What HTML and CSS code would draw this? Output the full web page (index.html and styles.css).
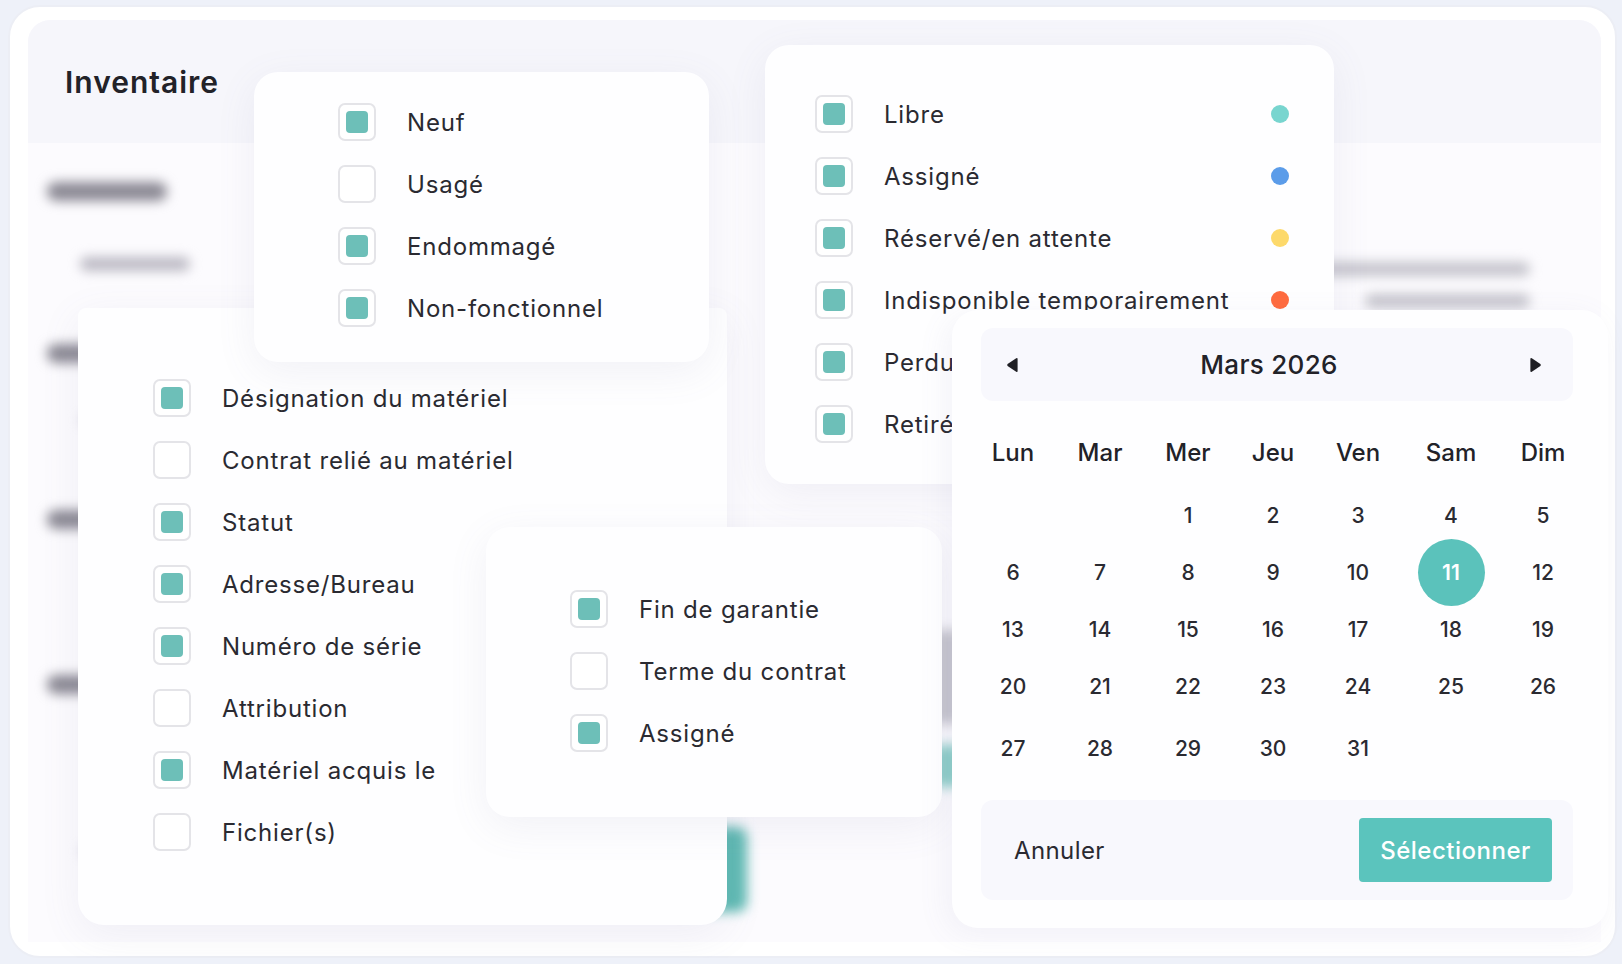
FILE: index.html
```html
<!DOCTYPE html>
<html lang="fr">
<head>
    <meta charset="UTF-8">
    <meta name="viewport" content="width=device-width, initial-scale=1.0">
    <title>Inventaire</title>
    <link rel="stylesheet" href="styles.css">
</head>
<body>

<div class="frame">

    <!-- page behind the popups, out of focus -->
    <div class="app">
        <header class="app-head">
            <h1>Inventaire</h1>
        </header>
        <div class="app-body">
            <div class="col-left">
                <div class="b-title first"></div>
                <div class="b-field"></div>
                <div class="b-title t2"></div>
                <div class="b-field light"></div>
                <div class="b-title t3"></div>
                <div class="b-title t4"></div>
                <div class="b-field light bottom"></div>
            </div>
            <div class="col-mid">
                <div class="b-block grey"></div>
                <div class="b-block teal"></div>
                <div class="b-button"></div>
            </div>
            <div class="col-right">
                <div class="b-line"></div>
                <div class="b-line short"></div>
            </div>
        </div>
    </div>

    <!-- columns shown in the table -->
    <div class="card card-columns">
        <ul class="checklist">
            <li><span class="box on"></span>Désignation du matériel</li>
            <li><span class="box"></span>Contrat relié au matériel</li>
            <li><span class="box on"></span>Statut</li>
            <li><span class="box on"></span>Adresse/Bureau</li>
            <li><span class="box on"></span>Numéro de série</li>
            <li><span class="box"></span>Attribution</li>
            <li><span class="box on"></span>Matériel acquis le</li>
            <li><span class="box"></span>Fichier(s)</li>
        </ul>
    </div>

    <!-- condition filter -->
    <div class="card card-state">
        <ul class="checklist">
            <li><span class="box on"></span>Neuf</li>
            <li><span class="box"></span>Usagé</li>
            <li><span class="box on"></span>Endommagé</li>
            <li><span class="box on"></span>Non-fonctionnel</li>
        </ul>
    </div>

    <!-- date columns -->
    <div class="card card-dates">
        <ul class="checklist">
            <li><span class="box on"></span>Fin de garantie</li>
            <li><span class="box"></span>Terme du contrat</li>
            <li><span class="box on"></span>Assigné</li>
        </ul>
    </div>

    <!-- status filter -->
    <div class="card card-status">
        <ul class="checklist">
            <li><span class="box on"></span>Libre<span class="dot free"></span></li>
            <li><span class="box on"></span>Assigné<span class="dot assigned"></span></li>
            <li><span class="box on"></span>Réservé/en attente<span class="dot pending"></span></li>
            <li><span class="box on"></span>Indisponible temporairement<span class="dot off"></span></li>
            <li><span class="box on"></span>Perdu</li>
            <li><span class="box on"></span>Retiré</li>
        </ul>
    </div>

    <!-- date picker -->
    <div class="card calendar">
        <div class="cal-head">
            <button class="cal-nav" aria-label="Mois précédent">
                <svg width="14" height="18" viewBox="0 0 14 18"><path d="M11.2 2.2 L2.6 8 Q1.6 9 2.6 10 L11.2 15.8 Q12.6 16.6 12.6 15 L12.6 3 Q12.6 1.4 11.2 2.2 Z" fill="#1f1f24"/></svg>
            </button>
            <span class="cal-title">Mars 2026</span>
            <button class="cal-nav" aria-label="Mois suivant">
                <svg width="14" height="18" viewBox="0 0 14 18"><path d="M2.8 2.2 L11.4 8 Q12.4 9 11.4 10 L2.8 15.8 Q1.4 16.6 1.4 15 L1.4 3 Q1.4 1.4 2.8 2.2 Z" fill="#1f1f24"/></svg>
            </button>
        </div>
        <div class="cal-grid">
            <span class="wd">Lun</span><span class="wd">Mar</span><span class="wd">Mer</span><span class="wd">Jeu</span><span class="wd">Ven</span><span class="wd">Sam</span><span class="wd">Dim</span>

            <span></span><span></span><span class="d">1</span><span class="d">2</span><span class="d">3</span><span class="d">4</span><span class="d">5</span>
            <span class="d">6</span><span class="d">7</span><span class="d">8</span><span class="d">9</span><span class="d">10</span><span class="d"><b class="sel">11</b></span><span class="d">12</span>
            <span class="d">13</span><span class="d">14</span><span class="d">15</span><span class="d">16</span><span class="d">17</span><span class="d">18</span><span class="d">19</span>
            <span class="d">20</span><span class="d">21</span><span class="d">22</span><span class="d">23</span><span class="d">24</span><span class="d">25</span><span class="d">26</span>
            <span class="d">27</span><span class="d">28</span><span class="d">29</span><span class="d">30</span><span class="d">31</span><span></span><span></span>
        </div>
        <div class="cal-foot">
            <button class="btn-cancel">Annuler</button>
            <button class="btn-select">Sélectionner</button>
        </div>
    </div>

</div>

</body>
</html>
```

FILE: styles.css
```css
body {
    margin: 0;
    background-color: #eef1f9;
    font-family: Inter, "Noto Sans", sans-serif;
    color: #2a2a31;
    overflow: hidden;
}

.frame {
    position: relative;
    height: 949px;
    margin: 5px 5px 0 8px;
    background-color: #fff;
    border: 2px solid #eceef5;
    border-radius: 32px;
}

/* ---- background app ---- */

.app {
    margin: 13px 14px 0 18px;
    height: 922px;
    background-color: #fcfbfe;
    border-radius: 22px 22px 0 0;
    overflow: hidden;
}

.app-head {
    height: 123px;
    display: flex;
    align-items: center;
    padding-left: 37px;
    background-color: #f6f6fb;
}

.app-head h1 {
    margin: 0;
    font-size: 30px;
    font-weight: 600;
    color: #222228;
    letter-spacing: 1px;
}

.app-body {
    display: flex;
    padding-left: 19px;
    filter: blur(6px);
}

.col-left {
    width: 600px;
    display: flex;
    flex-direction: column;
    align-items: flex-start;
}

.b-title {
    width: 120px;
    height: 19px;
    border-radius: 9px;
    background-color: #8b8994;
}

.b-title.first { margin-top: 39px; }
.b-title.t2 { margin-top: 73px; width: 100px; }
.b-title.t3 { margin-top: 83px; width: 100px; }
.b-title.t4 { margin-top: 146px; width: 100px; }

.b-field {
    width: 110px;
    height: 14px;
    margin: 56px 0 0 33px;
    border-radius: 7px;
    background-color: #bbb9c3;
}

.b-field.light {
    margin-top: 50px;
    background-color: #dedce4;
}

.b-field.bottom {
    margin-top: 150px;
    width: 60px;
}

.col-mid {
    box-sizing: border-box;
    width: 663px;
    display: flex;
    flex-direction: column;
    align-items: flex-start;
    padding-left: 20px;
}

.b-block {
    width: 40px;
    margin-left: 265px;
    border-radius: 6px;
}

.b-block.grey {
    height: 94px;
    margin-top: 487px;
    background-color: #c9c8d0;
}

.b-block.teal {
    height: 42px;
    margin-top: 21px;
    background-color: #8fd0ca;
}

.b-button {
    width: 80px;
    height: 85px;
    margin-top: 40px;
    border-radius: 10px;
    background-color: #5fbab3;
}

.col-right {
    width: 220px;
    padding-top: 119px;
    display: flex;
    flex-direction: column;
    align-items: flex-end;
}

.b-line {
    width: 220px;
    height: 14px;
    border-radius: 7px;
    background-color: #c4c3cb;
}

.b-line.short {
    width: 165px;
    margin-top: 18px;
}

/* ---- floating cards ---- */

.card {
    position: absolute;
    box-sizing: border-box;
    background-color: #fefeff;
    border-radius: 24px;
    box-shadow: 0 10px 40px rgba(110, 110, 160, 0.09);
}

.card-columns {
    left: 68px;
    top: 301px;
    width: 649px;
    height: 617px;
    padding: 71px 0 0 75px;
    border-radius: 8px 8px 26px 26px;
}

.card-state {
    left: 244px;
    top: 65px;
    width: 455px;
    height: 290px;
    padding: 31px 0 0 84px;
}

.card-dates {
    left: 476px;
    top: 520px;
    width: 456px;
    height: 290px;
    padding: 63px 0 0 84px;
}

.card-status {
    left: 755px;
    top: 38px;
    width: 569px;
    height: 439px;
    padding: 50px 45px 0 50px;
}

.checklist {
    list-style: none;
    margin: 0;
    padding: 0;
    display: flex;
    flex-direction: column;
    gap: 24px;
}

.checklist li {
    display: flex;
    align-items: center;
    height: 38px;
    font-size: 24px;
    letter-spacing: 0.8px;
}

.box {
    box-sizing: border-box;
    width: 38px;
    height: 38px;
    margin-right: 31px;
    flex-shrink: 0;
    display: flex;
    align-items: center;
    justify-content: center;
    border: 2px solid #e4e4e8;
    border-radius: 7px;
    background-color: #fff;
}

.box.on::after {
    content: "";
    width: 22px;
    height: 22px;
    border-radius: 4px;
    background-color: #6dbfb8;
}

.dot {
    width: 18px;
    height: 18px;
    margin-left: auto;
    border-radius: 50%;
}

.dot.free { background-color: #78d5cf; }
.dot.assigned { background-color: #5b9ce9; }
.dot.pending { background-color: #fdd96b; }
.dot.off { background-color: #ff6b3f; }

/* ---- calendar ---- */

.calendar {
    left: 942px;
    top: 303px;
    width: 656px;
    height: 618px;
    padding: 18px 35px 0 29px;
    border-radius: 26px;
    box-shadow: -6px 6px 30px rgba(110, 110, 160, 0.08);
}

.cal-head {
    height: 73px;
    display: flex;
    align-items: center;
    justify-content: space-between;
    padding: 0 30px 0 24px;
    border-radius: 12px;
    background-color: #f8f8fd;
}

.cal-nav {
    border: none;
    background: none;
    padding: 0;
    display: flex;
}

.cal-title {
    margin-right: 10px;
    font-size: 26px;
    font-weight: 500;
    color: #222228;
    letter-spacing: 0.3px;
}

.cal-grid {
    display: grid;
    grid-template-columns: 86px 88px 88px 82px 88px 98px 86px;
    grid-template-rows: 60px 57px 57px 57px 57px 67px;
    margin: 26px 0 0 -11px;
}

.cal-grid .wd {
    align-self: start;
    height: 50px;
    display: flex;
    align-items: center;
    justify-content: center;
    font-size: 24px;
    font-weight: 500;
    color: #222228;
}

.cal-grid .d {
    display: flex;
    align-items: center;
    justify-content: center;
    font-size: 21px;
    font-weight: 500;
    color: #2a2a31;
}

.cal-grid .sel {
    width: 67px;
    height: 67px;
    flex-shrink: 0;
    display: flex;
    align-items: center;
    justify-content: center;
    border-radius: 50%;
    background-color: #5bc2bb;
    color: #fff;
    font-weight: 600;
}

.cal-foot {
    height: 100px;
    margin-top: 18px;
    display: flex;
    align-items: center;
    justify-content: space-between;
    padding: 0 21px 0 33px;
    border-radius: 12px;
    background-color: #f8f8fd;
}

.btn-cancel {
    border: none;
    background: none;
    padding: 0;
    font-family: inherit;
    font-size: 24px;
    letter-spacing: 0.4px;
    color: #2a2a31;
}

.btn-select {
    width: 193px;
    height: 64px;
    border: none;
    border-radius: 4px;
    background-color: #5bc4bd;
    color: #fff;
    font-family: inherit;
    font-size: 24px;
    font-weight: 500;
    letter-spacing: 0.5px;
}
```
